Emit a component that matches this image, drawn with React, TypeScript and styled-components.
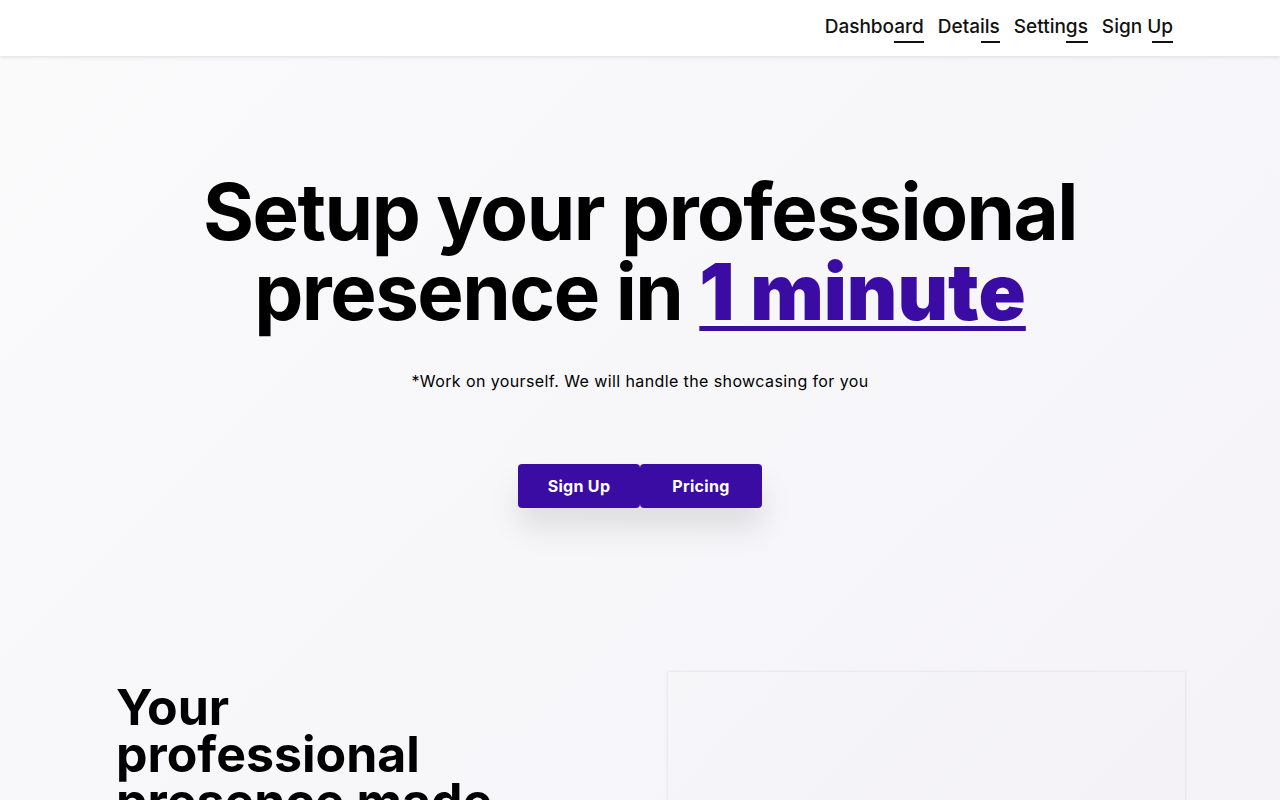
import styled, { createGlobalStyle } from "styled-components";

const GlobalStyle = createGlobalStyle`
  * { box-sizing: border-box; }
  body {
    margin: 0;
    font-family: Inter, "Noto Sans", sans-serif;
    color: #000;
    background: linear-gradient(135deg, #fafafb 0%, #f4f2f7 100%);
    min-height: 100vh;
  }
`

const Header = styled.header`
  height: 56px;
  background: #fff;
  box-shadow: 0 1px 4px rgba(0, 0, 0, 0.12);
  display: flex;
  justify-content: flex-end;
  align-items: center;
  padding: 0 107px 0 0;
`

const Nav = styled.nav`
  display: flex;
  gap: 14px;
`

const NavLink = styled.a`
  position: relative;
  font-size: 19px;
  font-weight: 500;
  color: #111;
  text-decoration: none;
  padding-bottom: 5px;
  margin-top: 2px;

  &::after {
    content: "";
    position: absolute;
    right: 0;
    bottom: 0;
    width: 30%;
    height: 2px;
    background: #111;
  }
`

const Hero = styled.section`
  display: flex;
  flex-direction: column;
  align-items: center;
  padding: 116px 0 0;
  height: 564px;
`

const Title = styled.h1`
  margin: 0;
  font-size: 78px;
  line-height: 80px;
  font-weight: 700;
  letter-spacing: -1.5px;
  text-align: center;
`

const Accent = styled.span`
  color: #3a0ca3;
  font-weight: 900;
  letter-spacing: 0;
  text-decoration: underline;
  text-decoration-thickness: 5px;
  text-underline-offset: 6px;
`

const Subtitle = styled.p`
  margin: 39px 0 0;
  font-size: 16px;
  letter-spacing: 0.4px;
`

const Actions = styled.div`
  display: flex;
  margin-top: 73px;
  box-shadow: 0 20px 30px rgba(0, 0, 0, 0.1);
`

const Button = styled.button`
  width: 122px;
  height: 44px;
  border: none;
  border-radius: 4px;
  background: #3a0ca3;
  color: #fff;
  font-family: inherit;
  font-size: 16px;
  font-weight: 700;
  letter-spacing: 0.3px;
  cursor: pointer;
`

const Features = styled.section`
  display: grid;
  grid-template-columns: 1fr 517px;
  gap: 60px;
  padding: 52px 95px 0 116px;
`

const FeatureTitle = styled.h2`
  margin: 12px 0 0;
  max-width: 400px;
  font-size: 50px;
  line-height: 47px;
  font-weight: 700;
`

const Card = styled.div`
  height: 400px;
  background: linear-gradient(135deg, #f6f5f8, #f2f0f5);
  box-shadow: 0 0 3px rgba(0, 0, 0, 0.12);
`

export default function App() {
  return (
    <>
      <GlobalStyle />
      <Header>
        <Nav>
          <NavLink href="#">Dashboard</NavLink>
          <NavLink href="#">Details</NavLink>
          <NavLink href="#">Settings</NavLink>
          <NavLink href="#">Sign Up</NavLink>
        </Nav>
      </Header>
      <Hero>
        <Title>
          Setup your professional
          <br />
          presence in <Accent>1 minute</Accent>
        </Title>
        <Subtitle>*Work on yourself. We will handle the showcasing for you</Subtitle>
        <Actions>
          <Button>Sign Up</Button>
          <Button>Pricing</Button>
        </Actions>
      </Hero>
      <Features>
        <FeatureTitle>Your professional presence made easy</FeatureTitle>
        <Card />
      </Features>
    </>
  )
}
